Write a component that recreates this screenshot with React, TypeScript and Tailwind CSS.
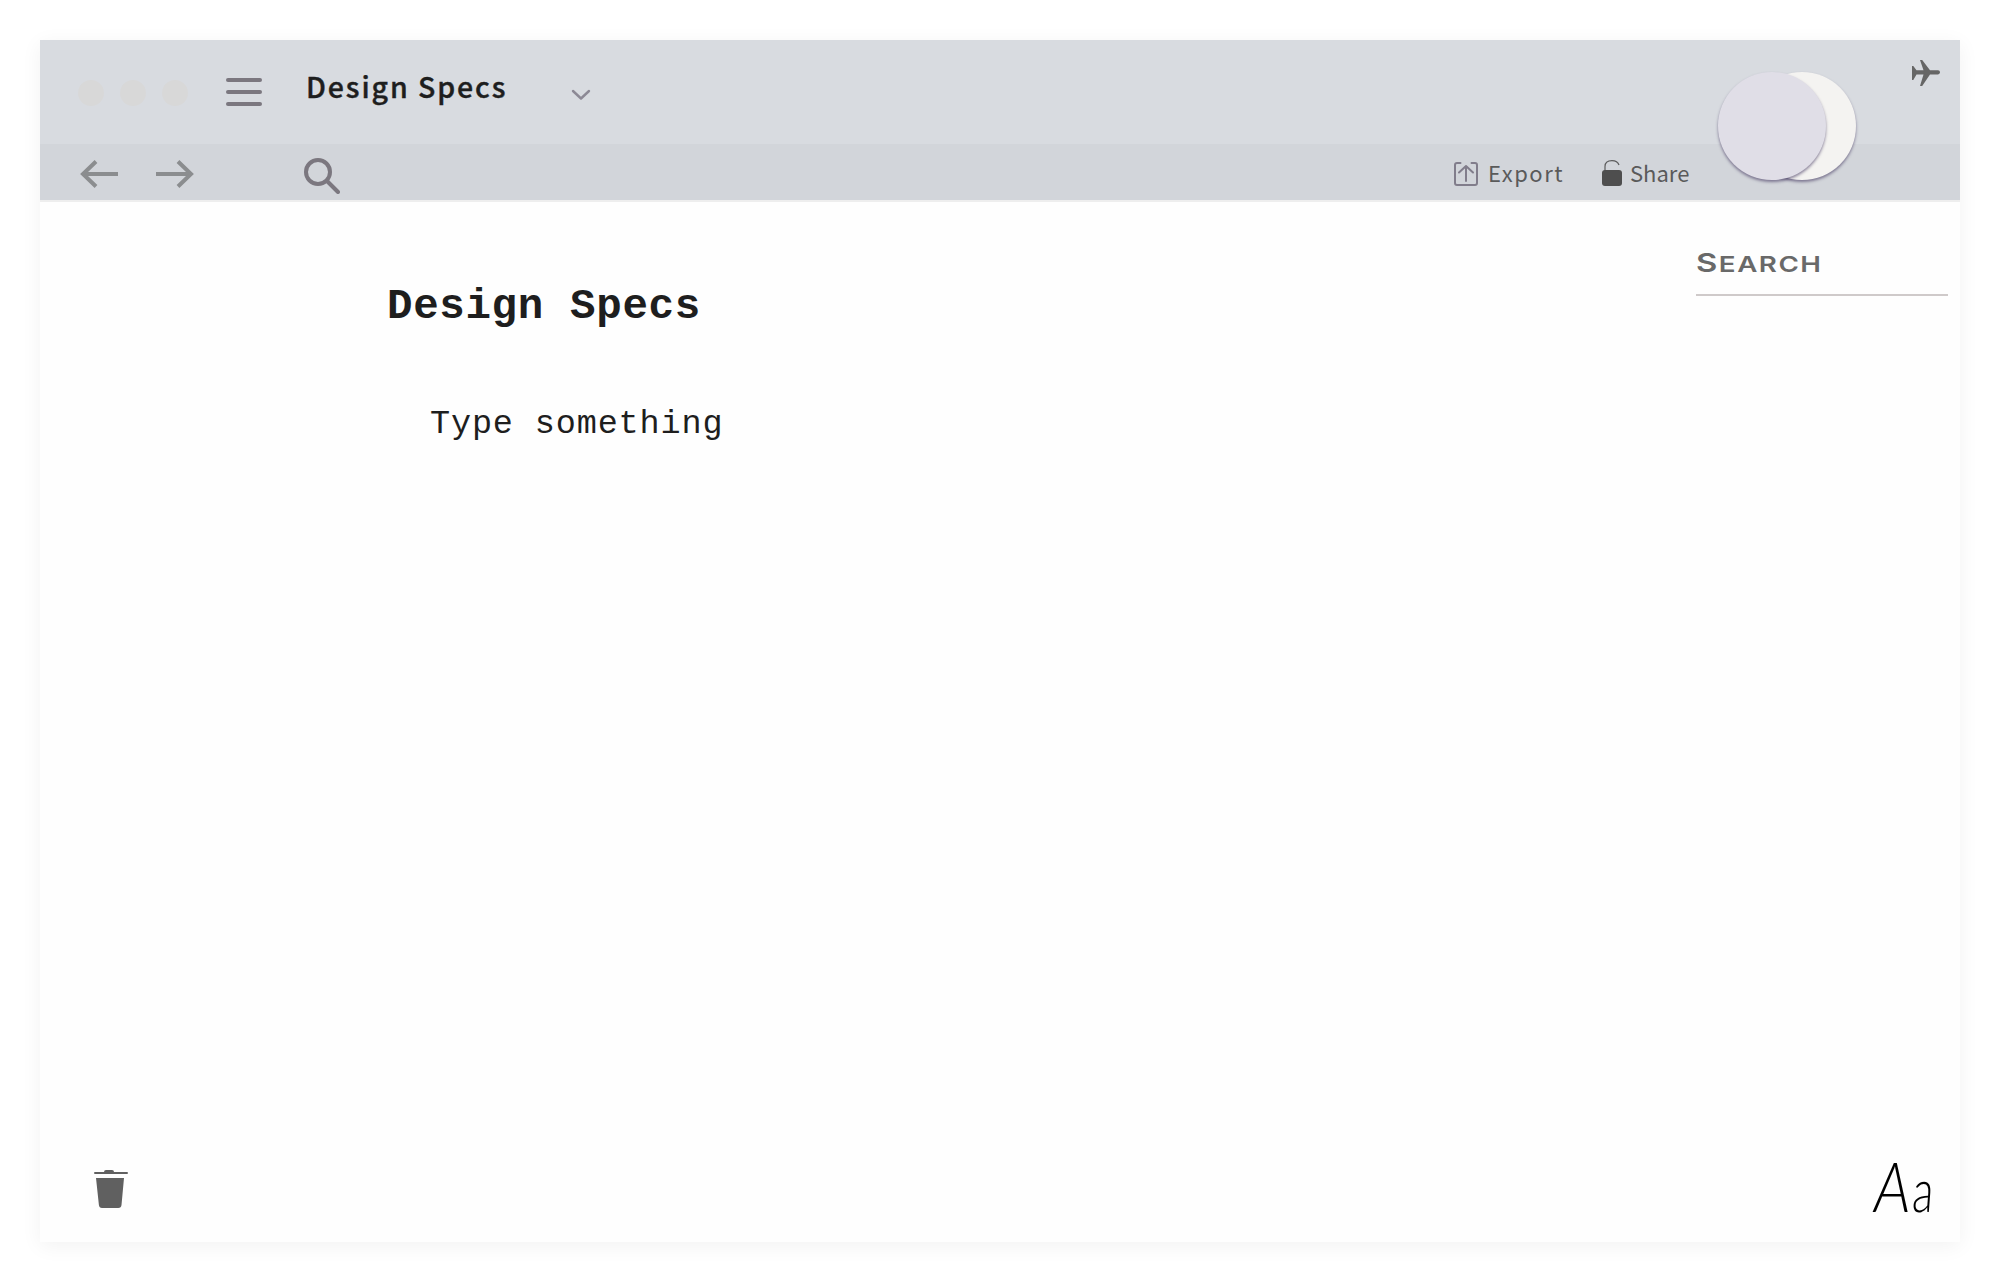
function WindowDots() {
  return (
    <div className="flex gap-4">
      <span className="size-[26px] rounded-full bg-[#d8d8d8]" />
      <span className="size-[26px] rounded-full bg-[#d8d8d8]" />
      <span className="size-[26px] rounded-full bg-[#d8d8d8]" />
    </div>
  );
}

function MenuIcon() {
  return (
    <div className="flex w-9 flex-col gap-2">
      <span className="h-1 rounded-full bg-[#7b777f]" />
      <span className="h-1 rounded-full bg-[#7b777f]" />
      <span className="h-1 rounded-full bg-[#7b777f]" />
    </div>
  );
}

function ArrowIcon({ className = "" }: { className?: string }) {
  return (
    <svg className={className} width="38" height="28" viewBox="0 0 38 28" fill="none" stroke="#8b8d8f" strokeWidth="4">
      <path d="M38 14H3" />
      <path d="M16 1.5L3 14l13 12.5" />
    </svg>
  );
}

function SearchIcon() {
  return (
    <svg width="36" height="36" viewBox="0 0 36 36" fill="none" stroke="#7b777f" strokeWidth="4" strokeLinecap="round">
      <circle cx="14" cy="14" r="12" />
      <path d="M23 23l11 11" />
    </svg>
  );
}

function ChevronIcon() {
  return (
    <svg width="20" height="12" viewBox="0 0 20 12" fill="none" stroke="#8c8995" strokeWidth="2.4" strokeLinecap="round" strokeLinejoin="round">
      <path d="M2 2l8 7.5L18 2" />
    </svg>
  );
}

function ExportIcon() {
  return (
    <svg width="24" height="24" viewBox="0 0 24 24" fill="none" stroke="#817d8b" strokeWidth="2" strokeLinecap="round" strokeLinejoin="round">
      <path d="M6.5 1H3a2 2 0 0 0-2 2v18a2 2 0 0 0 2 2h18a2 2 0 0 0 2-2V3a2 2 0 0 0-2-2h-3.5" />
      <path d="M12 19V4M5 10.5L12 4l7 6.5" />
    </svg>
  );
}

function LockIcon() {
  return (
    <svg width="20" height="26" viewBox="0 0 20 26" fill="none">
      <path d="M3 11V6.5C3 2.5 5.5 0.6 10 0.6c4 0 6 1.5 7 4.4" stroke="#5c5c5c" strokeWidth="1.2" />
      <rect y="10" width="20" height="16" rx="3" fill="#4e4e4e" />
    </svg>
  );
}

function PlaneIcon() {
  return (
    <svg width="28" height="26" viewBox="0 0 28 26" fill="#666">
      <path d="M0 6h1.3L4.5 10.2H11.5L8 0h2.2L18 10.2h8a2 2 0 0 1 2 1.8v.6a2 2 0 0 1-2 1.8h-8L10.2 26H8l3.5-11.6H4.5L1.3 20H0z" />
    </svg>
  );
}

function TrashIcon() {
  return (
    <svg width="34" height="38" viewBox="0 0 34 38" fill="#606060">
      <path d="M10 2q0-2 2-2h6q2 0 2 2h13a1 1 0 0 1 0 2H1a1 1 0 0 1 0-2z" />
      <path d="M2 8h28l-2.5 27q-.3 3-3.2 3H8q-2.8 0-3.1-3z" />
    </svg>
  );
}

export default function App() {
  return (
    <div className="h-[1280px] w-[2000px] overflow-hidden bg-white p-10">
      <div className="flex h-[1202px] w-[1920px] flex-col bg-[#fefefe] shadow-[0_4px_20px_rgba(0,0,0,0.055)]">
        <header className="relative font-['Noto_Sans_CJK_SC',sans-serif]">
          <div className="flex h-[104px] bg-[#d8dbe0]">
            <div className="ml-[38px] mt-10">
              <WindowDots />
            </div>
            <div className="ml-[38px] mt-[38px]">
              <MenuIcon />
            </div>
            <h1 className="ml-[44px] mt-[25px] w-[265px] whitespace-nowrap text-[28.5px] font-medium leading-[42px] tracking-[1.9px] text-[#1e1e1e] [-webkit-text-stroke:0.4px_#1e1e1e]">
              Design Specs
            </h1>
            <div className="mt-[49px]">
              <ChevronIcon />
            </div>
            <div className="ml-auto mr-5 mt-5">
              <PlaneIcon />
            </div>
          </div>
          <div className="flex h-14 bg-[#d2d5da]">
            <ArrowIcon className="ml-10 mt-4" />
            <ArrowIcon className="ml-[38px] mt-4 rotate-180" />
            <div className="ml-[110px] mt-[14px]">
              <SearchIcon />
            </div>
            <div className="ml-auto flex h-9 w-[506px] pt-[13px] text-[22px] leading-[30px] text-[#5a5a5a]">
              <div className="flex w-[148px] gap-[10px]">
                <span className="mt-[5px]">
                  <ExportIcon />
                </span>
                <span className="tracking-[1.5px]">Export</span>
              </div>
              <div className="flex gap-2">
                <span className="mt-[3px]">
                  <LockIcon />
                </span>
                <span>Share</span>
              </div>
            </div>
          </div>
          <div className="h-0.5 bg-[#eeeeee]" />
          <div className="absolute right-[104px] top-8 flex">
            <span className="relative z-10 size-[108px] rounded-full bg-[#e0dee7] shadow-[0_2px_3px_rgba(70,58,98,0.6)]" />
            <span className="-ml-[78px] size-[108px] rounded-full bg-[#f4f3f1] shadow-[0_2px_3px_rgba(70,58,98,0.6)]" />
          </div>
        </header>

        <div className="flex flex-1 justify-between">
          <main className="ml-[347px] whitespace-nowrap font-['Liberation_Mono',monospace] text-[#1e1e1e]">
            <h2 className="mt-[79px] text-[42.5px] font-bold leading-[52px] tracking-[0.65px]">Design Specs</h2>
            <p className="ml-[43px] mt-[69px] text-[33.5px] leading-[44px] tracking-[0.85px]">Type something</p>
          </main>
          <aside className="mr-3 mt-[43px] h-[51px] w-[252px] border-b-2 border-[#cfcaca]">
            <div className="w-[108px] origin-left scale-x-[1.26] whitespace-nowrap font-['Inter',sans-serif] text-[22px] font-semibold leading-[36px] tracking-[1.2px] text-[#696969]">
              <span className="text-[26px]">S</span>EARCH
            </div>
          </aside>
        </div>

        <footer className="flex items-end justify-between px-[29px] pb-[30px]">
          <span className="mb-1 ml-[25px]">
            <TrashIcon />
          </span>
          <span className="mb-[3px] flex h-[50px] items-baseline font-['Lato',sans-serif] text-[70px] font-light leading-[52px] text-black">
            <span className="origin-right scale-x-[0.86] italic">A</span>
            <span className="w-[20px] origin-bottom-left -skew-x-6 scale-x-[0.72] text-[60px]">a</span>
          </span>
        </footer>
      </div>
    </div>
  );
}
